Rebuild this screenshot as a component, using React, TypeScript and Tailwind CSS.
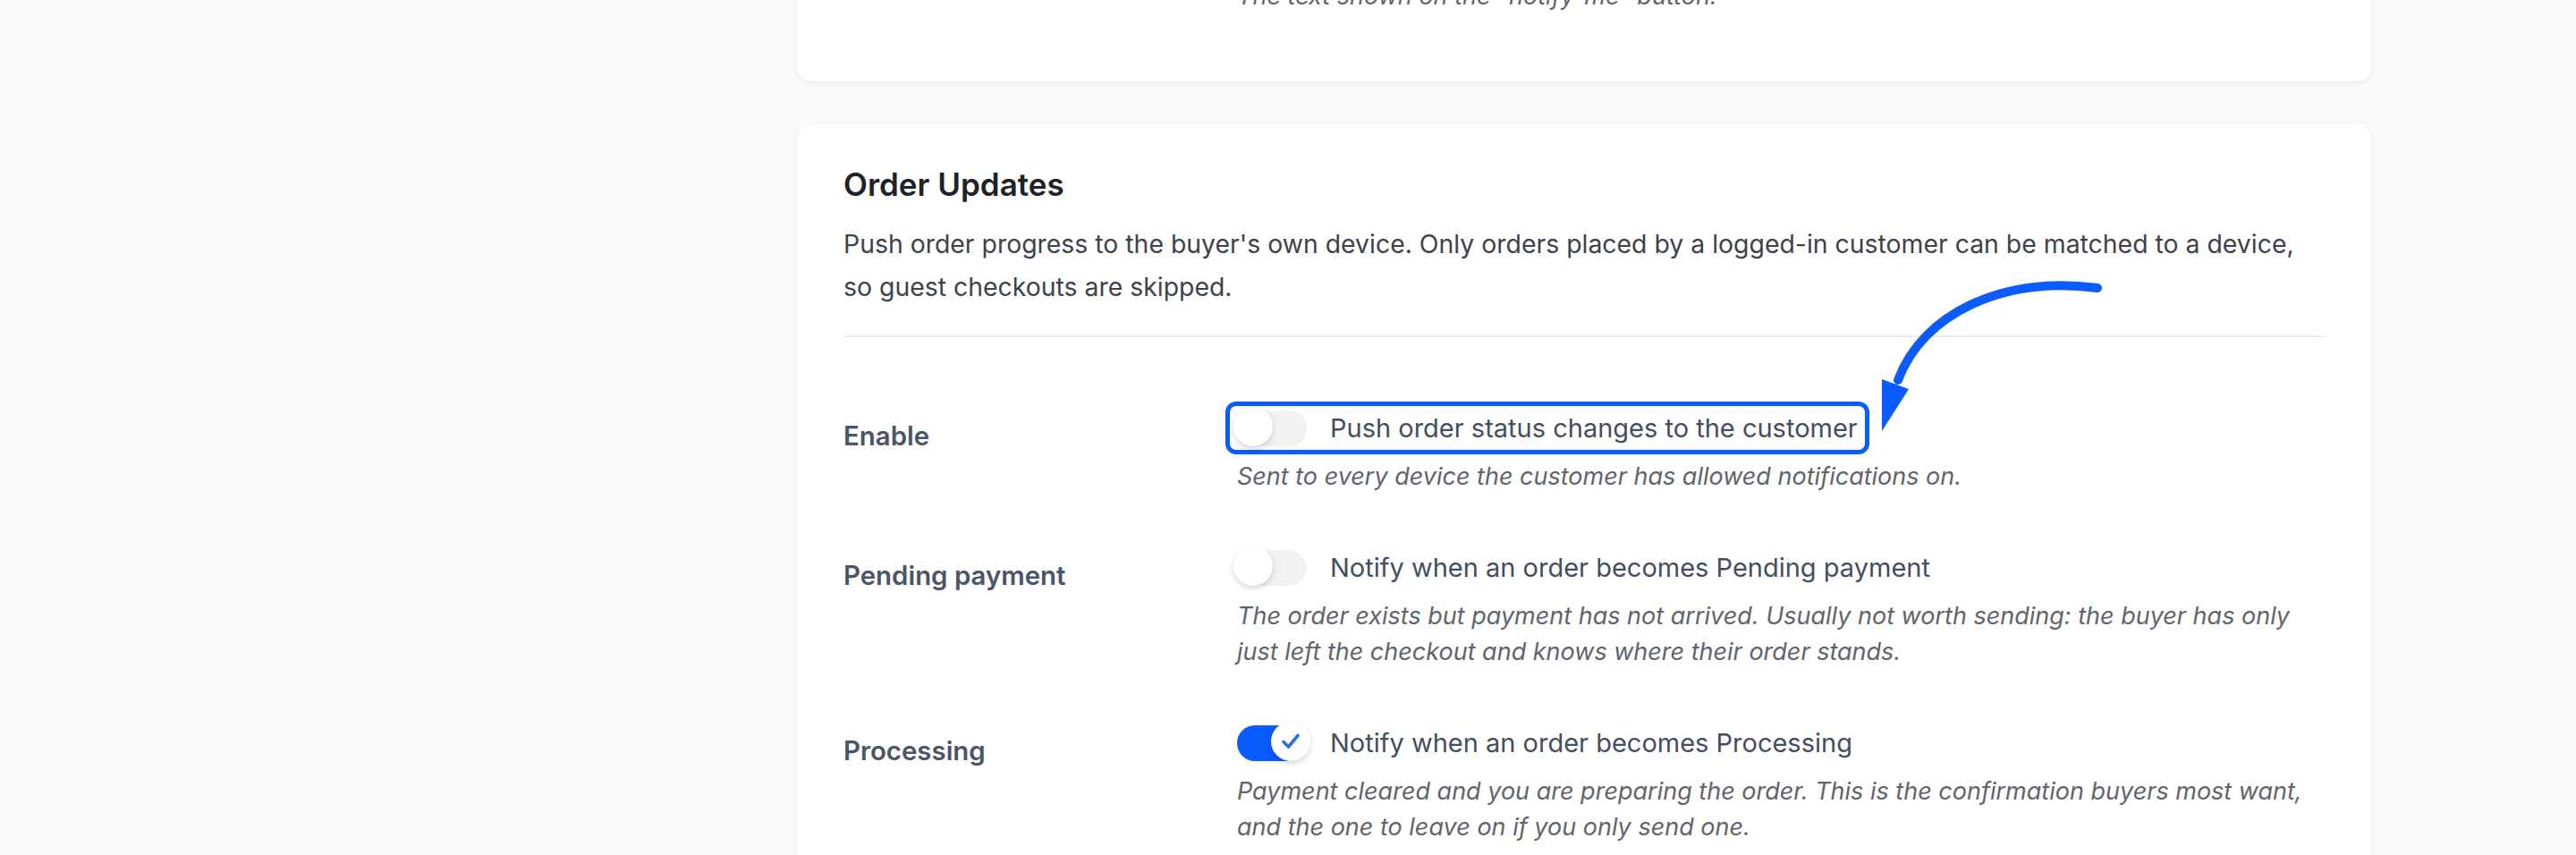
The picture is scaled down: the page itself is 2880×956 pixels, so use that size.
import React from "react";

function Check() {
  return (
    <svg width="22" height="20" viewBox="0 0 22 20" fill="none">
      <path d="M3 10.5 L8.5 16 L19 3.5" stroke="#2d6fdc" strokeWidth="3.6" strokeLinecap="round" strokeLinejoin="round" />
    </svg>
  );
}

function Toggle({ on }: { on: boolean }) {
  return (
    <span
      className={`relative block w-[78px] h-[40px] rounded-full shrink-0 ${
        on ? "bg-[#0a5cff]" : "bg-[#f1f2f4]"
      }`}
    >
      <span
        className={`absolute top-[-4px] ${
          on ? "right-[-4px]" : "left-[-4px]"
        } w-[44px] h-[44px] rounded-full bg-white shadow-[0_3px_6px_rgba(0,0,0,0.16)] flex items-center justify-center`}
      >
        {on && <Check />}
      </span>
    </span>
  );
}

function Row({
  label,
  text,
  desc,
  on,
  highlight,
}: {
  label: string;
  text: string;
  desc: React.ReactNode;
  on: boolean;
  highlight?: boolean;
}) {
  const inner = (
    <>
      <Toggle on={on} />
      <span className="text-[29px] leading-[40px] text-[#434e60] whitespace-nowrap">{text}</span>
    </>
  );
  return (
    <div className="grid grid-cols-[440px_1fr] py-[31px]">
      <div className="pt-[11px] text-[29.4px] leading-[36px] font-semibold text-[#4a5568]">{label}</div>
      <div>
        <div className="flex items-center h-[40px]">
          {highlight ? (
            <div className="inline-flex items-center gap-[26px] -ml-[13px] -mt-[10px] -mb-[9px] border-[5px] border-[#0a5cff] rounded-[12px] pl-[8px] pt-[5px] pb-[4px] pr-[8px]">
              {inner}
            </div>
          ) : (
            <div className="flex items-center gap-[26px]">{inner}</div>
          )}
        </div>
        <p className="mt-[14px] italic text-[27px] leading-[40px] text-[#60646b] whitespace-nowrap">{desc}</p>
      </div>
    </div>
  );
}

export default function App() {
  return (
    <div
      className="relative w-[2880px] h-[956px] overflow-hidden bg-[#f8f9fb]"
      style={{ fontFamily: "Inter, 'Noto Sans', 'Liberation Sans', sans-serif" }}
    >
      <div className="ml-[891px] w-[1760px] flex flex-col gap-[48px]">
        <div className="-mt-[24px] bg-white rounded-[16px] shadow-[0_2px_6px_rgba(16,24,40,0.06)] pl-[492px] pb-[75px]">
          <p className="italic text-[27px] leading-[40px] text-[#60646b]">
            The text shown on the “notify-me” button.
          </p>
        </div>

        <div className="bg-white rounded-[16px] shadow-[0_2px_6px_rgba(16,24,40,0.06)] px-[52px] pt-[45px] pb-[60px]">
          <h2 className="text-[35px] leading-[44px] font-semibold text-[#1d2327]">Order Updates</h2>
          <p className="mt-[21px] text-[28.4px] leading-[48px] text-[#3c434a] whitespace-nowrap">
            Push order progress to the buyer's own device. Only orders placed by a logged-in customer can be matched to a device,
            <br />
            so guest checkouts are skipped.
          </p>
          <div className="mt-[30px] mb-[51px] h-[2px] bg-[#ebebec]" />

          <div>
            <Row
              label="Enable"
              text="Push order status changes to the customer"
              desc="Sent to every device the customer has allowed notifications on."
              on={false}
              highlight
            />
            <Row
              label="Pending payment"
              text="Notify when an order becomes Pending payment"
              desc={
                <>
                  The order exists but payment has not arrived. Usually not worth sending: the buyer has only
                  <br />
                  just left the checkout and knows where their order stands.
                </>
              }
              on={false}
            />
            <Row
              label="Processing"
              text="Notify when an order becomes Processing"
              desc={
                <>
                  Payment cleared and you are preparing the order. This is the confirmation buyers most want,
                  <br />
                  and the one to leave on if you only send one.
                </>
              }
              on={true}
            />
          </div>
        </div>
      </div>

      <svg
        className="absolute left-[2090px] top-[300px]"
        width="270"
        height="200"
        viewBox="2090 300 270 200"
        fill="none"
      >
        <path
          d="M2345 322 C2240 308 2150 350 2122 425"
          stroke="#0a5cff"
          strokeWidth="10"
          strokeLinecap="round"
          fill="none"
        />
        <polygon points="2104,424 2134,435 2104,482" fill="#0a5cff" />
      </svg>
    </div>
  );
}
